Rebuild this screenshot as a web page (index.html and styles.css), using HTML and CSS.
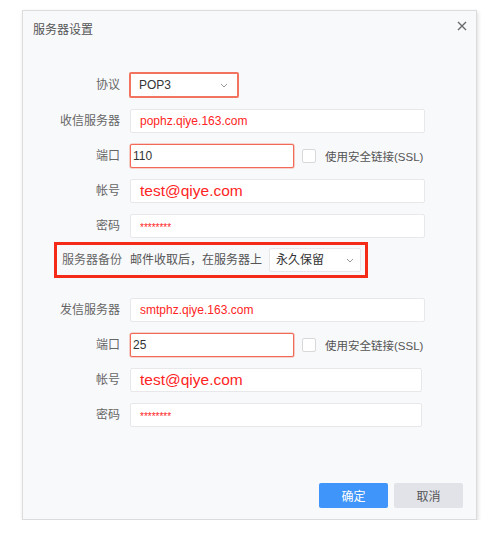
FILE: index.html
```html
<!DOCTYPE html>
<html lang="zh-CN">
<head>
<meta charset="utf-8">
<title>服务器设置</title>
<link rel="stylesheet" href="styles.css">
</head>
<body>
<div class="dialog">
  <div class="dialog-header">
    <span class="dialog-title">服务器设置</span>
    <svg class="close" width="10" height="10" viewBox="0 0 10 10"><path d="M1 1L9 9M9 1L1 9" stroke="#6b6b6b" stroke-width="1.4" fill="none"/></svg>
  </div>
  <div class="form">
    <div class="row row-select">
      <span class="label">协议</span>
      <div class="select select-protocol">
        <span class="select-value">POP3</span>
        <svg class="chev" width="8" height="5" viewBox="0 0 8 5"><path d="M1 1L4 4L7 1" stroke="#999" stroke-width="1" fill="none"/></svg>
      </div>
    </div>
    <div class="row">
      <span class="label">收信服务器</span>
      <div class="input"><span class="val red">pophz.qiye.163.com</span></div>
    </div>
    <div class="row">
      <span class="label">端口</span>
      <div class="input port hl"><span class="val dark">110</span></div>
      <span class="checkbox"></span>
      <span class="ssl">使用安全链接(SSL)</span>
    </div>
    <div class="row">
      <span class="label">帐号</span>
      <div class="input"><span class="val red big">test@qiye.com</span></div>
    </div>
    <div class="row">
      <span class="label">密码</span>
      <div class="input"><span class="val red stars">********</span></div>
    </div>
    <div class="backup">
      <span class="backup-label">服务器备份</span>
      <span class="backup-text">邮件收取后，在服务器上</span>
      <div class="select select-backup">
        <span class="select-value">永久保留</span>
        <svg class="chev" width="8" height="5" viewBox="0 0 8 5"><path d="M1 1L4 4L7 1" stroke="#999" stroke-width="1" fill="none"/></svg>
      </div>
    </div>
    <div class="row row-smtp">
      <span class="label">发信服务器</span>
      <div class="input"><span class="val red">smtphz.qiye.163.com</span></div>
    </div>
    <div class="row">
      <span class="label">端口</span>
      <div class="input port hl"><span class="val dark">25</span></div>
      <span class="checkbox"></span>
      <span class="ssl">使用安全链接(SSL)</span>
    </div>
    <div class="row">
      <span class="label">帐号</span>
      <div class="input narrow"><span class="val red big">test@qiye.com</span></div>
    </div>
    <div class="row">
      <span class="label">密码</span>
      <div class="input narrow"><span class="val red stars">********</span></div>
    </div>
  </div>
  <div class="footer">
    <button class="btn btn-primary">确定</button>
    <button class="btn btn-default">取消</button>
  </div>
</div>
</body>
</html>
```
FILE: styles.css
```css
* { box-sizing: border-box; }
html, body { margin: 0; padding: 0; background: #ffffff; }
body {
  font-family: "Liberation Sans", "Noto Sans CJK SC", sans-serif;
  font-size: 12px;
  color: #555;
}
.dialog {
  margin: 10px 0 0 22px;
  width: 455px;
  height: 510px;
  border: 1px solid #dcdcdc;
  background: #f8f9fb;
  box-shadow: 1px 2px 4px rgba(0,0,0,0.14);
  display: flex;
  flex-direction: column;
}
.dialog-header {
  display: flex;
  justify-content: space-between;
  align-items: flex-start;
  padding: 10px 9px 0 10px;
}
.dialog-title {
  font-size: 12px;
  line-height: 18px;
  color: #555;
}
.close { display: block; }
.form {
  margin-top: 33px;
  display: flex;
  flex-direction: column;
  gap: 11px;
}
.row {
  display: flex;
  align-items: center;
  height: 24px;
}
.row-select { height: 26px; }
.row-smtp { margin-top: 9px; }
.label {
  width: 97px;
  margin-right: 10px;
  text-align: right;
  color: #666;
  line-height: 16px;
  white-space: nowrap;
}
.input {
  width: 295px;
  height: 24px;
  background: #fff;
  border: 1px solid #e8e8ea;
  border-radius: 2px;
  display: flex;
  align-items: center;
  padding-left: 9px;
}
.input.narrow { width: 292px; }
.input.port {
  width: 164px;
  padding-left: 2px;
}
.hl {
  border: 1px solid #f06a55;
  box-shadow: 0 0 0 0.6px rgba(240,106,85,0.55);
}
.val { line-height: 16px; white-space: nowrap; }
.red { color: #ff2424; }
.dark { color: #333; }
.big { font-size: 15.5px; line-height: 18px; }
.stars { font-size: 10px; padding-top: 3px; }
.select {
  background: #fff;
  border: 1px solid #e8e8ea;
  border-radius: 2px;
  display: flex;
  align-items: center;
  justify-content: space-between;
}
.select-protocol {
  width: 110px;
  height: 26px;
  margin-left: -1px;
  padding: 0 9px 0 8px;
  border: 2px solid #f2745f;
}
.select-value { color: #333; line-height: 16px; }
.chev { display: block; }
.checkbox {
  width: 14px;
  height: 14px;
  margin-left: 8px;
  background: #fff;
  border: 1px solid #d9d9d9;
  border-radius: 2px;
}
.ssl {
  margin-left: 9px;
  font-size: 11.5px;
  color: #555;
  white-space: nowrap;
}
.backup {
  margin: -7px 0 0 31px;
  width: 314px;
  height: 36px;
  border: 3px solid #f42b17;
  display: flex;
  align-items: center;
  padding: 0 4px 0 5px;
}
.backup-label {
  width: 58px;
  color: #666;
  white-space: nowrap;
  line-height: 16px;
}
.backup-text {
  margin-left: 10px;
  color: #555;
  white-space: nowrap;
  line-height: 16px;
}
.select-backup {
  margin-left: 7px;
  width: 94px;
  height: 24px;
  padding: 0 6px 0 6px;
}
.footer {
  margin-top: auto;
  display: flex;
  justify-content: flex-end;
  gap: 6px;
  padding: 0 13px 11px 0;
}
.btn {
  width: 69px;
  height: 25px;
  border: none;
  border-radius: 2px;
  font-family: "Liberation Sans", "Noto Sans CJK SC", sans-serif;
  font-size: 12px;
  padding: 0;
}
.btn-primary { background: #3f95f9; color: #fff; }
.btn-default { background: #e1e3e9; color: #555; }
```
